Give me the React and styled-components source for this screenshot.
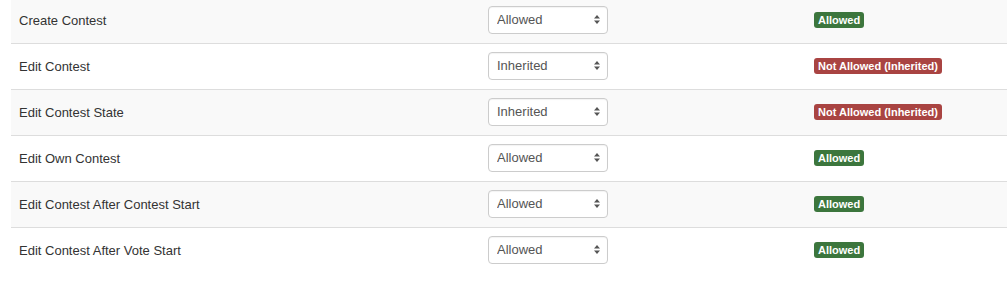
import React from 'react';
import styled, { createGlobalStyle } from 'styled-components';

const GlobalStyle = createGlobalStyle`
    html, body {
        margin: 0;
        padding: 0;
        background: #fff;
    }
    body {
        font-family: "Liberation Sans", Arial, sans-serif;
        font-size: 13px;
        color: #333;
    }
`;

const StyledTable = styled.div`
    margin: -3px 1px 0 11px;
`;
const StyledRow = styled.div`
    display: grid;
    grid-template-columns: 469px 326px 1fr;
    align-items: center;
    height: 45px;
    border-top: 1px solid #ddd;
    background-color: ${(props) => (props.striped ? '#f9f9f9' : '#fff')};
`;
const StyledCell = styled.div`
    padding: 0 8px 1px;
    display: flex;
    align-items: center;
`;
const StyledSelectWrap = styled.div`
    position: relative;
    width: 120px;
    height: 28px;
`;
const StyledSelect = styled.select`
    appearance: none;
    -webkit-appearance: none;
    width: 100%;
    height: 100%;
    margin: 0;
    padding: 0 20px 1px 8px;
    font-family: "Liberation Sans", Arial, sans-serif;
    font-size: 13px;
    color: #555;
    background-color: #fff;
    border: 1px solid #ccc;
    border-radius: 4px;
    box-shadow: inset 0 1px 1px rgba(0, 0, 0, 0.05);
    outline: none;
`;
const StyledArrows = styled.svg`
    position: absolute;
    right: 8px;
    top: 9px;
    pointer-events: none;
`;
const StyledBadge = styled.span`
    display: inline-block;
    padding: 3px 4px 2px;
    font-size: 11px;
    font-weight: bold;
    line-height: 1;
    color: #fff;
    border-radius: 3px;
    background-color: ${(props) => (props.ok ? '#3c763d' : '#a94442')};
`;

const rows = [
    { name: 'Create Contest', value: 'Allowed', ok: true },
    { name: 'Edit Contest', value: 'Inherited', ok: false },
    { name: 'Edit Contest State', value: 'Inherited', ok: false },
    { name: 'Edit Own Contest', value: 'Allowed', ok: true },
    { name: 'Edit Contest After Contest Start', value: 'Allowed', ok: true },
    { name: 'Edit Contest After Vote Start', value: 'Allowed', ok: true },
];

function PermissionSelect({ value }) {
    return (
        <StyledSelectWrap>
            <StyledSelect defaultValue={value}>
                <option>Allowed</option>
                <option>Not Allowed</option>
                <option>Inherited</option>
            </StyledSelect>
            <StyledArrows width="6" height="9" viewBox="0 0 6 9">
                <path d="M3 0 L6 3.5 L0 3.5 Z" fill="#555" />
                <path d="M3 9 L6 5.5 L0 5.5 Z" fill="#555" />
            </StyledArrows>
        </StyledSelectWrap>
    );
}

function App() {
    return (
        <>
            <GlobalStyle />
            <StyledTable>
                {rows.map((row, i) => (
                    <StyledRow key={row.name} striped={i % 2 === 0}>
                        <StyledCell>{row.name}</StyledCell>
                        <StyledCell>
                            <PermissionSelect value={row.value} />
                        </StyledCell>
                        <StyledCell>
                            <StyledBadge ok={row.ok}>
                                {row.ok ? 'Allowed' : 'Not Allowed (Inherited)'}
                            </StyledBadge>
                        </StyledCell>
                    </StyledRow>
                ))}
            </StyledTable>
        </>
    );
}

export default App;
